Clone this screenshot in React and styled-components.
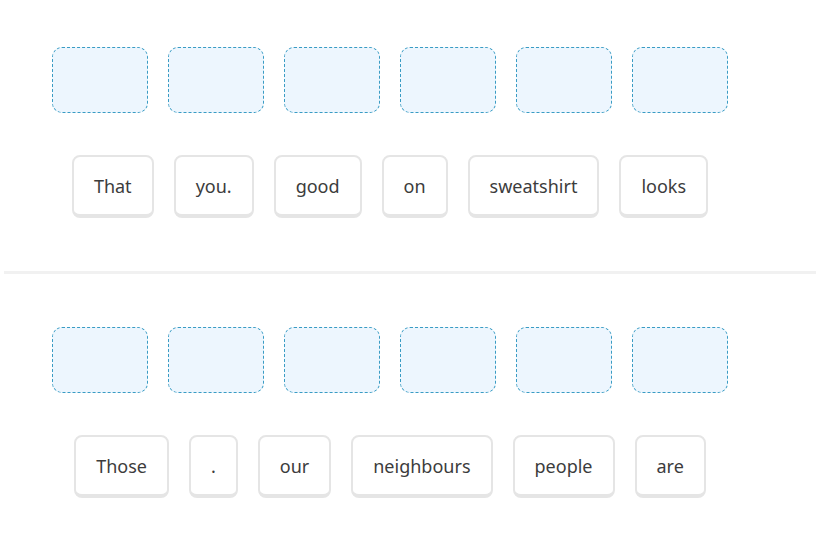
import React from "react"
import styled, { createGlobalStyle } from "styled-components"

const GlobalStyle = createGlobalStyle`
    html, body {
        margin: 0;
        padding: 0;
        background: #ffffff;
        font-family: "Noto Sans", "Open Sans", sans-serif;
    }
`

// Styles
const Page = styled.div`
    width: 824px;
    padding-top: 47px;
`

const Section = styled.section`
    padding: ${props => (props.first ? "0" : "53px")} 52px 53px;
`

const Board = styled.div`
    width: 676px;
`

const Slots = styled.div`
    display: flex;
    gap: 20px;
`

const Slot = styled.div`
    width: 96px;
    height: 66px;
    box-sizing: border-box;
    border: 1px dashed #3a9cc4;
    border-radius: 10px;
    background: #edf6fe;
`

const Bank = styled.div`
    display: flex;
    justify-content: center;
    gap: 20px;
    margin-top: 42px;
`

const Tile = styled.button`
    height: 63px;
    box-sizing: border-box;
    padding: 0 20px;
    background: #ffffff;
    border: 2px solid #e5e5e5;
    border-bottom-width: 4px;
    border-radius: 8px;
    font-family: "Noto Sans", "Open Sans", sans-serif;
    font-size: 18px;
    color: #3c3c3c;
    display: flex;
    align-items: center;
    justify-content: center;
    cursor: pointer;
`

const Divider = styled.hr`
    margin: 0 8px 0 4px;
    height: 3px;
    border: none;
    background: #f1f1f1;
`

const exercises = [
    ["That", "you.", "good", "on", "sweatshirt", "looks"],
    ["Those", ".", "our", "neighbours", "people", "are"],
]

function Exercise({ words, first }) {
    return (
        <Section first={first}>
            <Board>
                <Slots>
                    {words.map((_, i) => (
                        <Slot key={i} />
                    ))}
                </Slots>

                <Bank>
                    {words.map(word => (
                        <Tile key={word}>{word}</Tile>
                    ))}
                </Bank>
            </Board>
        </Section>
    )
}

function App() {
    return (
        <Page>
            <GlobalStyle />

            <Exercise words={exercises[0]} first />
            <Divider />
            <Exercise words={exercises[1]} />
        </Page>
    )
}

export default App
